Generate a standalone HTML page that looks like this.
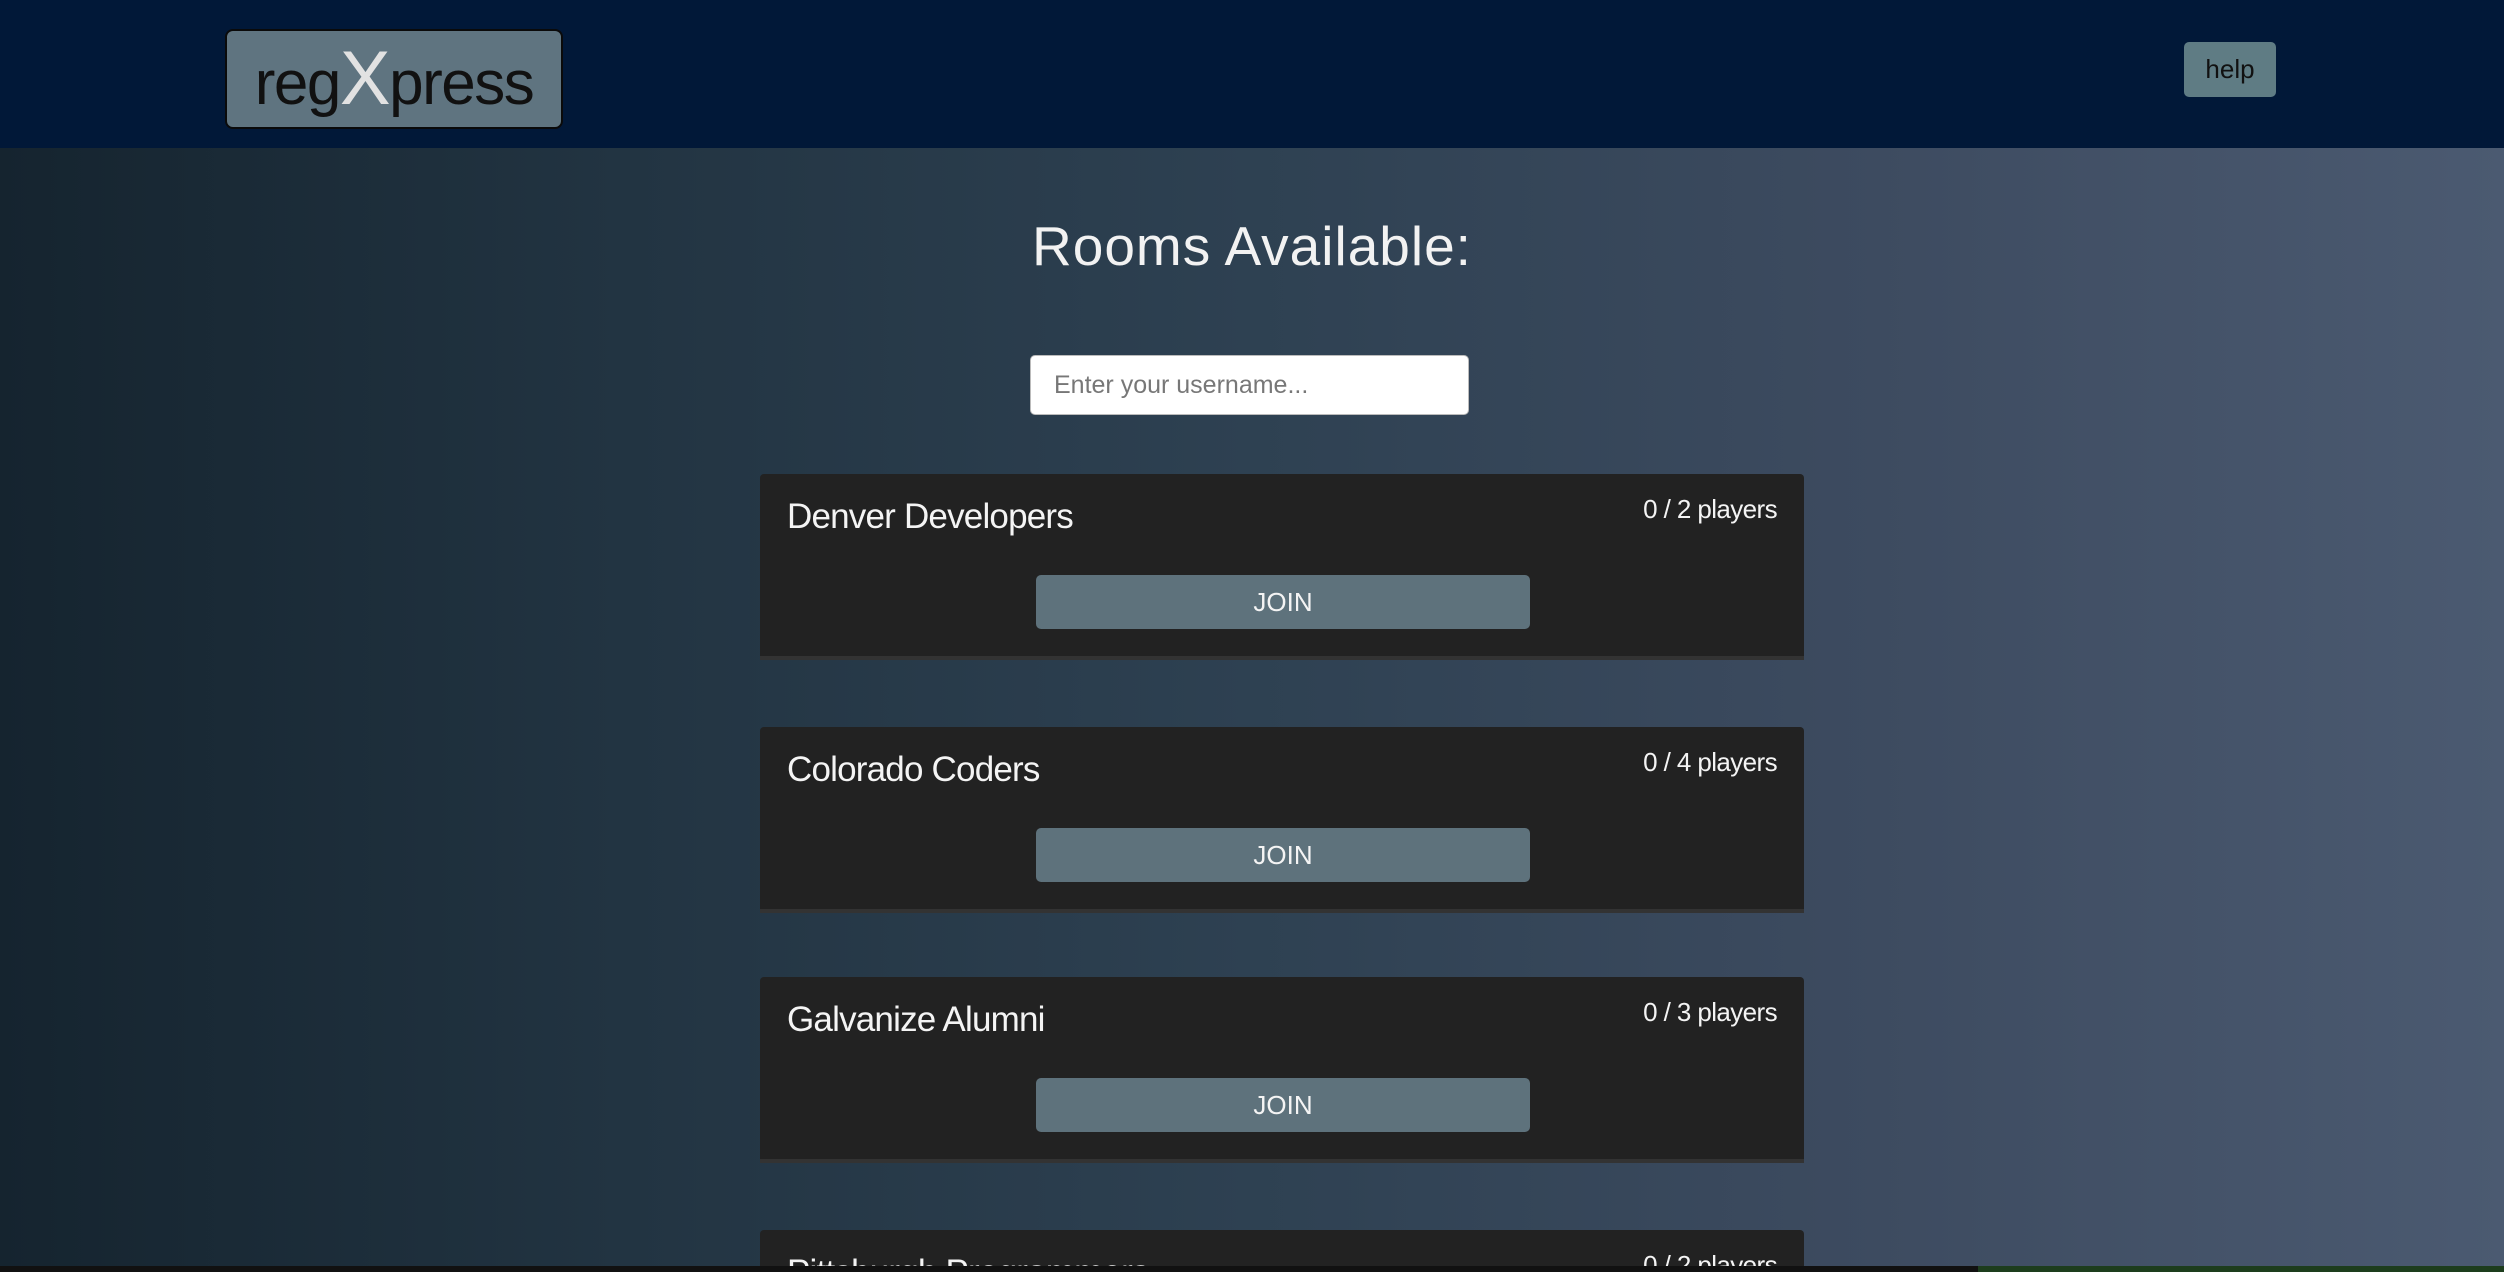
<!DOCTYPE html>
<html><head><meta charset="utf-8"><style>
*{margin:0;padding:0;box-sizing:border-box}
html,body{width:2504px;height:1272px;overflow:hidden;font-family:"Liberation Sans",sans-serif}
body{background:linear-gradient(90deg,#15242f 0%,#223442 25%,#2e4152 50%,#3d4b60 75%,#4b5a71 100%);position:relative}
.hdr{position:absolute;left:0;top:0;width:2504px;height:148px;background:#011838}
.logo{position:absolute;left:225px;top:29px;width:338px;height:100px;background:#5f7480;border:2px solid #0a0a0a;border-radius:8px;font-size:62px;color:#111;text-align:center;line-height:96px;letter-spacing:-1.5px}
.logo span{color:#e2e2e2;font-size:76px}
.help{position:absolute;left:2184px;top:42px;width:92px;height:55px;background:#5f7c84;border-radius:5px;font-size:26px;color:#111;text-align:center;line-height:55px}
h1{position:absolute;left:0;width:2504px;top:214px;text-align:center;font-weight:normal;font-size:55px;color:#f2f2f2;letter-spacing:1px}
.inp{position:absolute;left:1030px;top:355px;width:439px;height:60px;background:#fff;border:1px solid #bbb;border-radius:5px;font-size:25px;color:#777;padding-left:23px;line-height:58px}
.card{position:absolute;left:760px;width:1044px;height:186px;background:#222;border-radius:4px 4px 0 0;border-bottom:4px solid #333;overflow:hidden}
.card .t{position:absolute;left:27px;top:23px;font-size:35px;color:#f4f4f4;letter-spacing:-0.8px}
.card .p{position:absolute;right:27px;top:20px;font-size:26px;color:#f4f4f4;letter-spacing:-0.6px}
.card .b{position:absolute;left:276px;top:101px;width:494px;height:54px;background:#5e727c;border-radius:5px;color:#f4f4f4;font-size:26px;text-align:center;line-height:54px}
.bot{position:absolute;left:0;top:1266px;width:2504px;height:6px;background:#111}
.bot i{position:absolute;left:1978px;top:0;width:526px;height:6px;background:#1d3d1d}
</style></head><body>
<div class="hdr"><div class="logo">reg<span>X</span>press</div><div class="help">help</div></div>
<h1>Rooms Available:</h1>
<div class="inp">Enter your username...</div>
<div class="card" style="top:474px"><div class="t">Denver Developers</div><div class="p">0 / 2 players</div><div class="b">JOIN</div></div>
<div class="card" style="top:727px"><div class="t">Colorado Coders</div><div class="p">0 / 4 players</div><div class="b">JOIN</div></div>
<div class="card" style="top:977px"><div class="t">Galvanize Alumni</div><div class="p">0 / 3 players</div><div class="b">JOIN</div></div>
<div class="card" style="top:1230px;height:42px;border-bottom:0"><div class="t">Pittsburgh Programmers</div><div class="p">0 / 2 players</div></div>
<div class="bot"><i></i></div>
</body></html>
